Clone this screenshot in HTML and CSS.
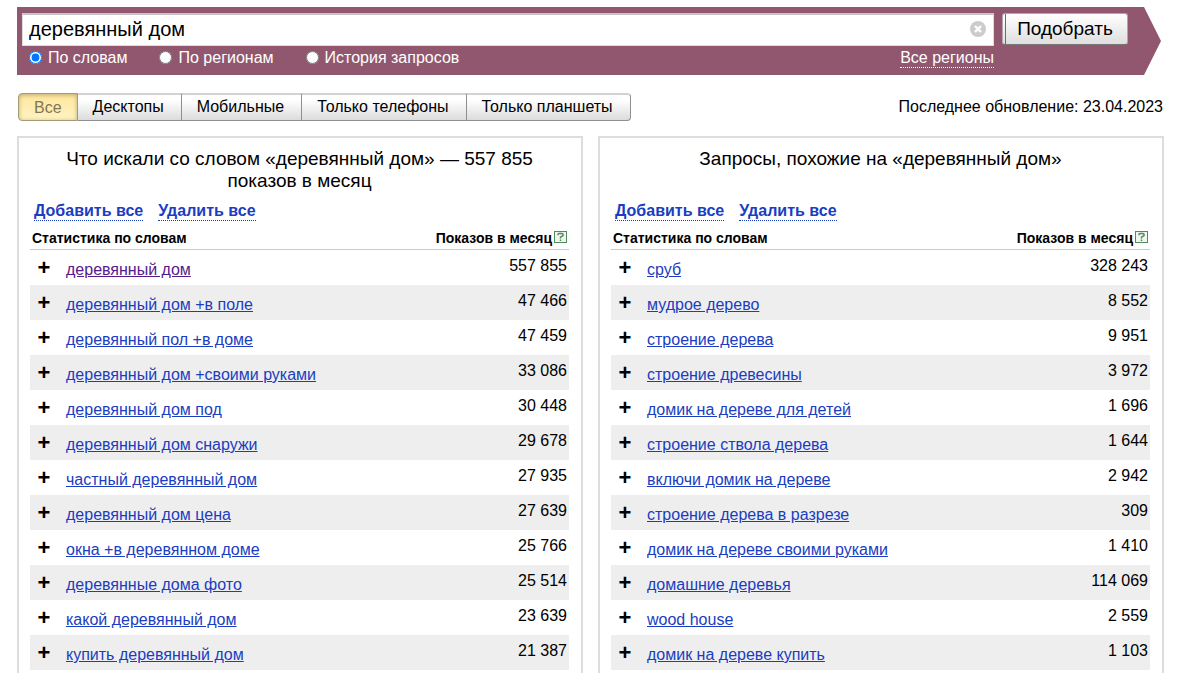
FILE: index.html
```html
<!DOCTYPE html>
<html lang="ru">
<head>
<meta charset="utf-8">
<title>Подбор слов</title>
<link rel="stylesheet" href="styles.css">
</head>
<body>
<div class="page">
<form class="search">
  <div class="search-main">
    <div class="field">
      <input class="query" type="text" aria-label="Запрос" value="деревянный дом">
      <button class="clear" type="button" aria-label="Очистить"><svg width="16" height="16" viewBox="0 0 16 16"><circle cx="8" cy="8" r="8" fill="#ccc"/><path d="M5 5l6 6M11 5l-6 6" stroke="#fff" stroke-width="2.4"/></svg></button>
    </div>
    <div class="options">
      <label class="option"><input type="radio" name="mode" checked>По словам</label>
      <label class="option"><input type="radio" name="mode">По регионам</label>
      <label class="option"><input type="radio" name="mode">История запросов</label>
      <a class="regions" href="#">Все регионы</a>
    </div>
  </div>
  <button class="submit" type="button">Подобрать</button>
</form>
<div class="toolbar">
  <div class="tabs">
    <button class="tab tab-active" type="button">Все</button>
    <button class="tab" type="button">Десктопы</button>
    <button class="tab" type="button">Мобильные</button>
    <button class="tab" type="button">Только телефоны</button>
    <button class="tab" type="button">Только планшеты</button>
  </div>
  <div class="updated">Последнее обновление: 23.04.2023</div>
</div>
<main class="columns">
  <section class="panel">
    <h2 class="title">Что искали со словом «деревянный дом» — 557 855 показов в месяц</h2>
    <div class="actions"><a href="#">Добавить все</a><a href="#">Удалить все</a></div>
    <table class="stats">
      <thead><tr><th class="head-word" colspan="2">Статистика по словам</th><th class="head-count">Показов в месяц<svg class="help" width="13" height="12" viewBox="0 0 13 12"><rect x=".5" y=".5" width="12" height="11" fill="#eef6ef" stroke="#54895e"/><path d="M4 4.2V3.5Q4 2.5 5 2.5H8Q9 2.5 9 3.5V4.5L6.5 6.2V7.5M6.5 8.6V10" fill="none" stroke="#54895e" stroke-width="1.5"/></svg></th></tr></thead>
      <tbody>
        <tr><td class="add"><button type="button">+</button></td><td class="word"><a class="visited" href="#">деревянный дом</a></td><td class="count">557 855</td></tr>
        <tr><td class="add"><button type="button">+</button></td><td class="word"><a href="#">деревянный дом +в поле</a></td><td class="count">47 466</td></tr>
        <tr><td class="add"><button type="button">+</button></td><td class="word"><a href="#">деревянный пол +в доме</a></td><td class="count">47 459</td></tr>
        <tr><td class="add"><button type="button">+</button></td><td class="word"><a href="#">деревянный дом +своими руками</a></td><td class="count">33 086</td></tr>
        <tr><td class="add"><button type="button">+</button></td><td class="word"><a href="#">деревянный дом под</a></td><td class="count">30 448</td></tr>
        <tr><td class="add"><button type="button">+</button></td><td class="word"><a href="#">деревянный дом снаружи</a></td><td class="count">29 678</td></tr>
        <tr><td class="add"><button type="button">+</button></td><td class="word"><a href="#">частный деревянный дом</a></td><td class="count">27 935</td></tr>
        <tr><td class="add"><button type="button">+</button></td><td class="word"><a href="#">деревянный дом цена</a></td><td class="count">27 639</td></tr>
        <tr><td class="add"><button type="button">+</button></td><td class="word"><a href="#">окна +в деревянном доме</a></td><td class="count">25 766</td></tr>
        <tr><td class="add"><button type="button">+</button></td><td class="word"><a href="#">деревянные дома фото</a></td><td class="count">25 514</td></tr>
        <tr><td class="add"><button type="button">+</button></td><td class="word"><a href="#">какой деревянный дом</a></td><td class="count">23 639</td></tr>
        <tr><td class="add"><button type="button">+</button></td><td class="word"><a href="#">купить деревянный дом</a></td><td class="count">21 387</td></tr>
      </tbody>
    </table>
  </section>
  <section class="panel">
    <h2 class="title">Запросы, похожие на «деревянный дом»</h2>
    <div class="actions"><a href="#">Добавить все</a><a href="#">Удалить все</a></div>
    <table class="stats">
      <thead><tr><th class="head-word" colspan="2">Статистика по словам</th><th class="head-count">Показов в месяц<svg class="help" width="13" height="12" viewBox="0 0 13 12"><rect x=".5" y=".5" width="12" height="11" fill="#eef6ef" stroke="#54895e"/><path d="M4 4.2V3.5Q4 2.5 5 2.5H8Q9 2.5 9 3.5V4.5L6.5 6.2V7.5M6.5 8.6V10" fill="none" stroke="#54895e" stroke-width="1.5"/></svg></th></tr></thead>
      <tbody>
        <tr><td class="add"><button type="button">+</button></td><td class="word"><a href="#">сруб</a></td><td class="count">328 243</td></tr>
        <tr><td class="add"><button type="button">+</button></td><td class="word"><a href="#">мудрое дерево</a></td><td class="count">8 552</td></tr>
        <tr><td class="add"><button type="button">+</button></td><td class="word"><a href="#">строение дерева</a></td><td class="count">9 951</td></tr>
        <tr><td class="add"><button type="button">+</button></td><td class="word"><a href="#">строение древесины</a></td><td class="count">3 972</td></tr>
        <tr><td class="add"><button type="button">+</button></td><td class="word"><a href="#">домик на дереве для детей</a></td><td class="count">1 696</td></tr>
        <tr><td class="add"><button type="button">+</button></td><td class="word"><a href="#">строение ствола дерева</a></td><td class="count">1 644</td></tr>
        <tr><td class="add"><button type="button">+</button></td><td class="word"><a href="#">включи домик на дереве</a></td><td class="count">2 942</td></tr>
        <tr><td class="add"><button type="button">+</button></td><td class="word"><a href="#">строение дерева в разрезе</a></td><td class="count">309</td></tr>
        <tr><td class="add"><button type="button">+</button></td><td class="word"><a href="#">домик на дереве своими руками</a></td><td class="count">1 410</td></tr>
        <tr><td class="add"><button type="button">+</button></td><td class="word"><a href="#">домашние деревья</a></td><td class="count">114 069</td></tr>
        <tr><td class="add"><button type="button">+</button></td><td class="word"><a href="#">wood house</a></td><td class="count">2 559</td></tr>
        <tr><td class="add"><button type="button">+</button></td><td class="word"><a href="#">домик на дереве купить</a></td><td class="count">1 103</td></tr>
      </tbody>
    </table>
  </section>
</main>
</div>
</body>
</html>
```
FILE: styles.css
```css
* { box-sizing: border-box; }
body {
  margin: 0;
  background: #fff;
  color: #000;
  font: 16px/20px "Liberation Sans", Arial, sans-serif;
}
button, input { font-family: inherit; }
.page {
  height: 100vh;
  overflow: hidden;
  padding: 7px 18px 0 17px;
}
.search {
  display: flex;
  align-items: flex-start;
  gap: 8px;
  height: 68px;
  margin-right: 3px;
  padding: 6px 33px 0 5px;
  background: #91576f;
  clip-path: polygon(0 0, calc(100% - 17px) 0, 100% 50%, calc(100% - 17px) 100%, 0 100%);
}
.search-main { flex: 1; }
.field {
  display: flex;
  align-items: center;
  height: 33px;
  padding: 0 7px 2px 0;
  background: #fff;
  border: 1px solid #ddd;
  border-top: 2px solid #c4c4c4;
}
.query {
  flex: 1;
  min-width: 0;
  padding: 0 6px;
  border: 0;
  outline: 0;
  background: none;
  color: #000;
  font-size: 20px;
}
.clear { display: flex; padding: 0; border: 0; background: none; }
.options { display: flex; align-items: center; padding: 1px 0 0 7px; color: #fff; }
.option { display: flex; align-items: center; gap: 6px; margin-right: 32px; }
.option input { width: 13px; height: 13px; margin: 0; }
.regions {
  margin-left: auto;
  padding-top: 2px;
  color: #fff;
  line-height: 18px;
  text-decoration: none;
  border-bottom: 1px dotted #fff;
}
.submit {
  width: 126px;
  height: 32px;
  padding: 0 0 1px;
  border: 1px solid #b7a3ac;
  border-bottom-color: #777;
  border-radius: 3px;
  background: linear-gradient(90deg, transparent 2px, #91576f 2px, #91576f 3px, transparent 3px), linear-gradient(#fff, #dedede);
  color: #000;
  font-size: 19px;
}
.toolbar {
  display: flex;
  justify-content: space-between;
  margin-top: 18px;
  padding: 0 1px;
}
.tabs { display: flex; }
.tab {
  height: 28px;
  padding: 0 17px 2px 15px;
  border: 1px solid #8f8f8f;
  border-top: 2px solid #d2d2d2;
  border-left-width: 0;
  background: linear-gradient(#fff 20%, #dcdcdc);
  color: #000;
  font-size: 16px;
}
.tab:last-child { border-radius: 0 4px 4px 0; }
.tab-active {
  padding: 2px 15px 0;
  border: 1px solid #a79b74;
  border-radius: 4px 0 0 4px;
  background: linear-gradient(#ffe69b, #fff3c4);
  box-shadow: inset 0 1px 4px #b9a874;
  color: #807858;
}
.updated { padding-top: 4px; }
.columns {
  display: grid;
  grid-template-columns: 1fr 1fr;
  gap: 15px;
  margin-top: 15px;
}
.panel {
  border: 2px solid #ddd;
  padding: 10px 12px 40px 11px;
}
.title {
  height: 44px;
  margin: 0;
  padding: 0 24px;
  font-size: 19px;
  font-weight: 400;
  line-height: 22px;
  text-align: center;
}
.actions { display: flex; gap: 15px; padding: 10px 4px 0; font-weight: 700; line-height: 18px; }
.actions a { color: #1a3dc1; text-decoration: none; border-bottom: 1px dotted #1a3dc1; }
.stats { width: 100%; border-collapse: separate; border-spacing: 0; }
.stats th {
  height: 29px;
  padding: 7px 2px 0;
  border-bottom: 1px solid #c9c9d4;
  font-size: 14px;
  line-height: 20px;
  text-align: left;
  vertical-align: top;
}
.stats .head-count { text-align: right; white-space: nowrap; }
.help { margin-left: 2px; }
.stats td { height: 35px; padding: 0; vertical-align: top; }
.stats tr:nth-child(even) td { background: #eee; }
.stats .add { width: 36px; }
.add button {
  display: block;
  width: 28px;
  padding: 6px 0 0;
  border: 0;
  background: none;
  color: #000;
  font-size: 22px;
  font-weight: 700;
  line-height: 24px;
  text-align: center;
}
.stats .word { padding-top: 10px; }
.word a { color: #1a3dc1; }
.word .visited { color: #551a8b; }
.stats .count { padding: 6px 2px 0 0; text-align: right; }
```
